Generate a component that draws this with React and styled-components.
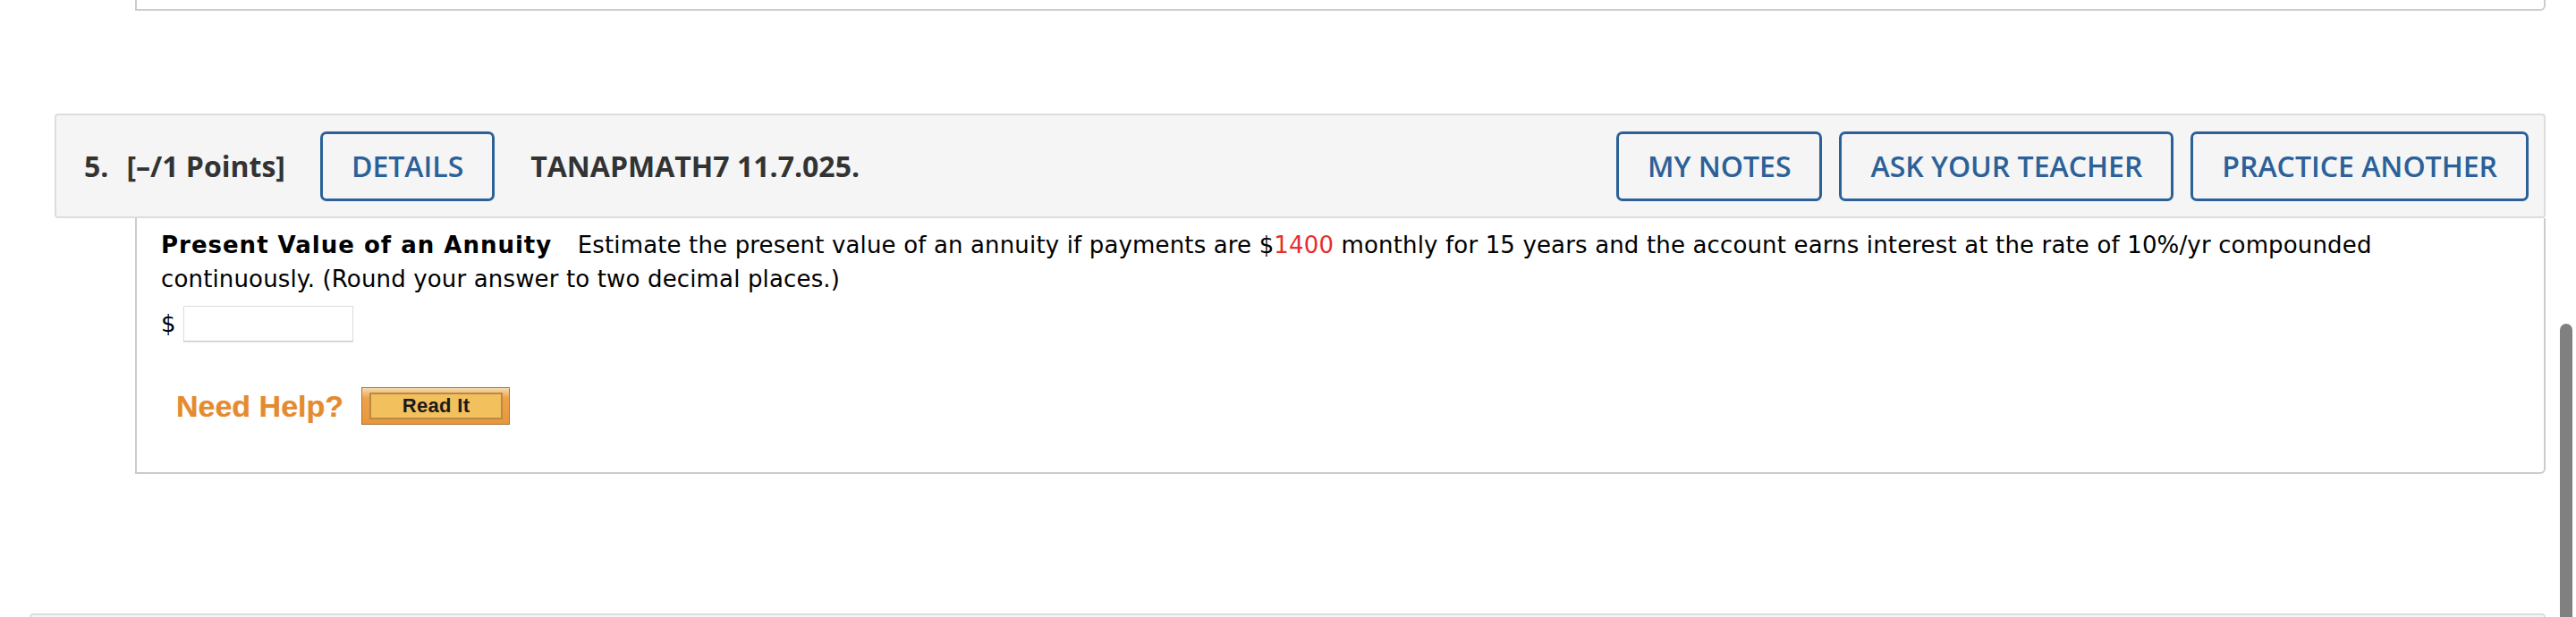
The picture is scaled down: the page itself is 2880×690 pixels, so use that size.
import React from 'react'
import styled, { createGlobalStyle } from 'styled-components'

const GlobalStyle = createGlobalStyle`
    html, body {
        margin : 0;
        padding : 0;
        background : #ffffff;
        overflow : hidden;
    }
`

const Page = styled.div`
    position : relative;
    width : 2880px;
    height : 690px;
    overflow : hidden;
    background : #ffffff;
`

const PrevPanel = styled.div`
    margin : 0 34px 0 151px;
    height : 10px;
    border : 2px solid #cccccc;
    border-top : 0;
    border-radius : 0 0 6px 0;
`

const QuestionHeader = styled.div`
    display : flex;
    align-items : center;
    box-sizing : border-box;
    height : 117px;
    margin : ${(props) => props.top}px 34px 0 ${(props) => props.left}px;
    padding : 0 17px 0 31px;
    background : #f5f5f5;
    border : 2px solid #dddddd;
    border-radius : 4px;
    font-family : 'Open Sans', 'Liberation Sans', sans-serif;
    color : #333333;
`

const Number = styled.span`
    font-size : 32px;
    font-weight : 700;
    margin-right : 20px;
`

const Points = styled.span`
    font-size : 32px;
    font-weight : 700;
    margin-right : 39px;
`

const Title = styled.span`
    font-size : 32px;
    font-weight : 700;
    margin-left : 40px;
`

const OutlineButton = styled.button`
    box-sizing : border-box;
    height : 78px;
    padding : 0 32px;
    background : transparent;
    border : 3px solid #2b6198;
    border-radius : 7px;
    color : #2b6198;
    font-family : 'Open Sans', 'Liberation Sans', sans-serif;
    font-size : 32px;
    font-weight : 600;
    white-space : nowrap;
    cursor : pointer;
`

const ButtonGroup = styled.div`
    display : flex;
    gap : 19px;
    margin-left : auto;
`

const QuestionBody = styled.div`
    margin : 0 34px 0 151px;
    padding : 11px 80px 53px 27px;
    border : 2px solid #cccccc;
    border-top : 0;
    border-radius : 0 0 6px 0;
    font-family : 'DejaVu Sans', Verdana, sans-serif;
    font-size : 26px;
    line-height : 38px;
    color : #000000;
`

const Prompt = styled.p`
    margin : 0;
    letter-spacing : 0.15px;
    b {
        font-weight : 700;
        letter-spacing : 1px;
        margin-right : 20px;
    }
`

const Given = styled.span`
    color : #e62e2d;
`

const AnswerRow = styled.div`
    display : flex;
    align-items : center;
    gap : 8px;
    margin-top : 11px;
`

const AnswerInput = styled.input`
    box-sizing : border-box;
    width : 190px;
    height : 40px;
    border : 1px solid #dddddd;
    border-bottom-color : #c4c4c4;
    box-shadow : 0 1px 1px rgba(0, 0, 0, 0.08);
    outline : none;
    font-size : 24px;
`

const HelpRow = styled.div`
    display : flex;
    align-items : center;
    gap : 20px;
    margin : 51px 0 0 17px;
`

const HelpLabel = styled.span`
    font-family : 'Liberation Sans', Arial, sans-serif;
    font-size : 34px;
    font-weight : 700;
    line-height : 42px;
    color : #e48b30;
    text-shadow : 0 0 1px rgba(228, 139, 48, 0.5);
`

const ReadItButton = styled.div`
    box-sizing : border-box;
    width : 166px;
    height : 42px;
    padding : 5px 7px 5px 8px;
    border : 1px solid #a8743a;
    background : linear-gradient(#f8dcae 0%, #eca24a 28%, #e8973a 100%);
    cursor : pointer;
`

const ReadItFace = styled.div`
    box-sizing : border-box;
    height : 100%;
    display : flex;
    align-items : center;
    justify-content : center;
    border : 2px solid #b98a45;
    background : #f2c05c;
    font-family : 'Liberation Sans', Arial, sans-serif;
    font-size : 22px;
    font-weight : 700;
    letter-spacing : 0.3px;
    color : #1b1b1b;
`

const ScrollThumb = styled.div`
    position : absolute;
    left : 2862px;
    top : 362px;
    width : 14px;
    height : 360px;
    border-radius : 7px;
    background : #808080;
`

const App = () => {
    return (
        <Page>
            <GlobalStyle />
            <PrevPanel />
            <QuestionHeader top={115} left={61}>
                <Number>5.</Number>
                <Points>[–/1 Points]</Points>
                <OutlineButton>DETAILS</OutlineButton>
                <Title>TANAPMATH7 11.7.025.</Title>
                <ButtonGroup>
                    <OutlineButton>MY NOTES</OutlineButton>
                    <OutlineButton>ASK YOUR TEACHER</OutlineButton>
                    <OutlineButton>PRACTICE ANOTHER</OutlineButton>
                </ButtonGroup>
            </QuestionHeader>
            <QuestionBody>
                <Prompt>
                    <b>Present Value of an Annuity</b> Estimate the present value of an annuity if payments are $<Given>1400</Given> monthly for 15 years and the account earns interest at the rate of 10%/yr compounded continuously. (Round your answer to two decimal places.)
                </Prompt>
                <AnswerRow>
                    <span>$</span>
                    <AnswerInput type="text" />
                </AnswerRow>
                <HelpRow>
                    <HelpLabel>Need Help?</HelpLabel>
                    <ReadItButton>
                        <ReadItFace>Read It</ReadItFace>
                    </ReadItButton>
                </HelpRow>
            </QuestionBody>
            <QuestionHeader top={156} left={33} />
            <ScrollThumb />
        </Page>
    )
}

export default App
